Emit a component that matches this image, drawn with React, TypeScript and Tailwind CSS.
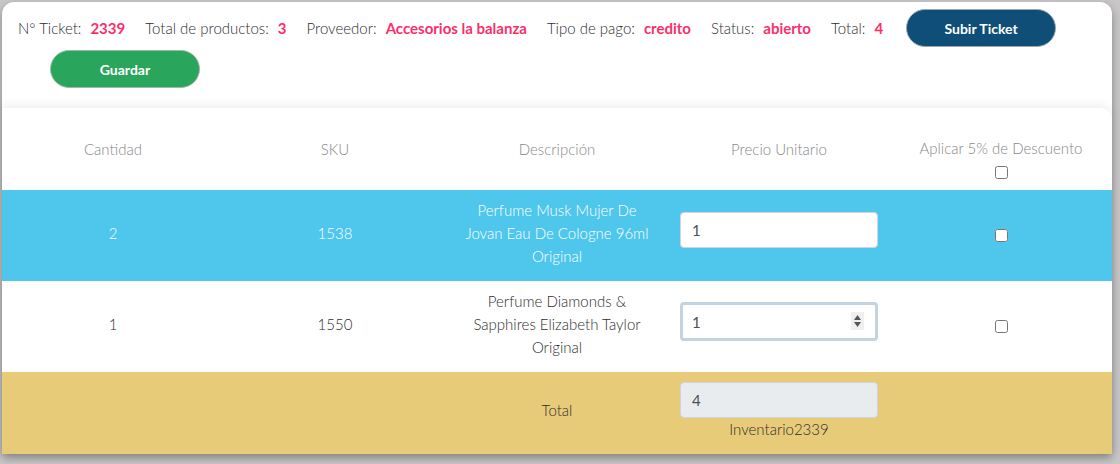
import { useState } from "react";

const rows = [
  { cantidad: 2, sku: "1538", desc: ["Perfume Musk Mujer De", "Jovan Eau De Cologne 96ml", "Original"], precio: "1" },
  { cantidad: 1, sku: "1550", desc: ["Perfume Diamonds &", "Sapphires Elizabeth Taylor", "Original"], precio: "1" },
];

function Info({ label, value }: { label: string; value: string }) {
  return (
    <div className="flex items-center gap-[9px]">
      <span className="text-[#2e2e2e] font-light">{label}</span>
      <span className="font-bold text-[#fb2f69]">{value}</span>
    </div>
  );
}

export default function App() {
  const [checks, setChecks] = useState([false, false, false]);

  const toggle = (i: number) => {
    const next = [...checks];
    next[i] = !next[i];
    setChecks(next);
  };

  return (
    <div className="min-h-[464px] bg-[#c9c7c7] pt-[2px] pl-[2px] pr-[8px] pb-[10px]" style={{ fontFamily: "Lato, 'Noto Sans', sans-serif" }}>
      <div className="bg-white rounded-t-xl shadow-[0_4px_10px_rgba(0,0,0,0.35)]">
        {/* Cabecera del ticket */}
        <div className="px-4 pt-2 text-[15px]">
          <div className="flex items-center gap-x-[20px] h-[38px] pb-[2px]">
            <Info label="N° Ticket:" value="2339" />
            <Info label="Total de productos:" value="3" />
            <Info label="Proveedor:" value="Accesorios la balanza" />
            <Info label="Tipo de pago:" value="credito" />
            <Info label="Status:" value="abierto" />
            <Info label="Total:" value="4" />
            <button className="ml-[3px] w-[150px] h-[38px] rounded-full bg-[#0e4e77] border border-[#9aa7b0] text-white font-bold text-[14px]">
              Subir Ticket
            </button>
          </div>
          <div className="mt-[2px] pl-[32px]">
            <button className="w-[150px] h-[38px] rounded-full bg-[#2aa55c] border border-[#9fb8a8] text-white font-bold text-[14px]">
              Guardar
            </button>
          </div>
        </div>

        {/* Tabla de productos */}
        <div className="mt-[20px] rounded-tr-xl shadow-[0_-4px_10px_rgba(0,0,0,0.06)] overflow-hidden font-light">
          <div className="grid grid-cols-5 h-[82px] items-center text-center text-[15px] leading-[23px] text-[#888888]">
            <div>Cantidad</div>
            <div>SKU</div>
            <div>Descripción</div>
            <div>Precio Unitario</div>
            <div className="self-start flex flex-col items-center pt-[29px]">
              <span>Aplicar 5% de Descuento</span>
              <input type="checkbox" checked={checks[0]} onChange={() => toggle(0)} className="mt-[6px] w-[13px] h-[13px]" />
            </div>
          </div>

          {rows.map((r, i) => (
            <div
              key={r.sku}
              className={`grid grid-cols-5 h-[91px] items-center text-center text-[15px] leading-[23px] pb-[5px] ${i === 0 ? "bg-[#4fc6eb] text-white" : "bg-white text-[#2e2e2e]"}`}
            >
              <div>{r.cantidad}</div>
              <div>{r.sku}</div>
              <div className="flex flex-col">
                {r.desc.map(line => (
                  <span key={line}>{line}</span>
                ))}
              </div>
              <div className={`self-start px-[12px] ${i === 0 ? "pt-[22px]" : "pt-[21px]"}`}>
                <div className="relative">
                  <input
                    type="text"
                    defaultValue={r.precio}
                    className={`w-full rounded-[4px] bg-white font-normal text-[15px] text-[#495057] outline-none ${i === 1 ? "h-[39px] border-[3px] border-[#c3d3df] px-[9px]" : "h-[36px] border border-[#ced4da] px-[11px]"}`}
                  />
                  {i === 1 && (
                    <div className="absolute right-[14px] top-[10px] w-[13px] h-[18px] bg-[#efefef] flex flex-col items-center justify-center gap-[2px]">
                      <svg width="7" height="5" viewBox="0 0 7 5"><path d="M3.5 0L7 5H0z" fill="#555" /></svg>
                      <svg width="7" height="5" viewBox="0 0 7 5"><path d="M0 0h7L3.5 5z" fill="#555" /></svg>
                    </div>
                  )}
                </div>
              </div>
              <div className="flex justify-center pt-[5px]">
                <input type="checkbox" checked={checks[i + 1]} onChange={() => toggle(i + 1)} className="w-[13px] h-[13px]" />
              </div>
            </div>
          ))}

          {/* Fila de total */}
          <div className="grid grid-cols-5 h-[82px] text-center text-[15px] leading-[23px] bg-[#e8cb79] text-[#2e2e2e]">
            <div />
            <div />
            <div className="pt-[27px]">Total</div>
            <div className="px-[12px] flex flex-col items-center pt-[10px]">
              <input
                type="text"
                disabled
                value="4"
                readOnly
                className="w-full h-[36px] rounded-[4px] bg-[#e9ecef] border border-[#ced4da] px-[11px] font-normal text-[15px] text-[#495057]"
              />
              <span className="mt-0 leading-[22px]">Inventario2339</span>
            </div>
            <div />
          </div>
        </div>
      </div>
    </div>
  );
}
